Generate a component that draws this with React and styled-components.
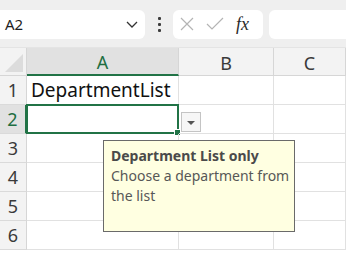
import React from "react";
import styled, { createGlobalStyle } from "styled-components";

const GlobalStyle = createGlobalStyle`
  html, body {
    margin: 0;
    padding: 0;
    background: #ffffff;
    overflow: hidden;
  }
  body {
    font-family: "Noto Sans", "Open Sans", sans-serif;
  }
`;

const Page = styled.div`
  width: 346px;
  height: 254px;
  position: relative;
  overflow: hidden;
  background: #ffffff;
`;

const Toolbar = styled.div`
  height: 48px;
  background: #efefef;
  display: flex;
  align-items: center;
  box-sizing: border-box;
  padding-top: 1px;
  border-bottom: 1px solid #e4e4e4;
`;

const NameBox = styled.div`
  width: 145px;
  height: 29px;
  background: #ffffff;
  border-radius: 0 6px 6px 0;
  display: flex;
  align-items: center;
  justify-content: space-between;
  padding: 0 6px 0 5px;
  box-sizing: border-box;
  font-size: 15px;
  color: #1f1f1f;
`;

const Dots = styled.div`
  width: 28px;
  display: flex;
  flex-direction: column;
  align-items: center;
  gap: 3px;

  span {
    width: 3px;
    height: 3px;
    background: #3c3c3c;
    border-radius: 1px;
  }
`;

const FxBox = styled.div`
  width: 90px;
  height: 29px;
  background: #ffffff;
  border-radius: 6px;
  display: flex;
  align-items: center;
  padding: 0 6px;
  box-sizing: border-box;
  gap: 11px;
`;

const FxLabel = styled.span`
  font-family: "Liberation Serif", "DejaVu Serif", serif;
  font-style: italic;
  font-size: 18px;
  color: #2a2a2a;
  margin-left: 1px;
`;

const FormulaInput = styled.div`
  flex: 1;
  height: 29px;
  margin-left: 6px;
  background: #ffffff;
  border-radius: 6px 0 0 6px;
`;

const Grid = styled.div`
  display: grid;
  grid-template-columns: 27px 152px 95px 72px;
  grid-template-rows: 28px repeat(6, 29px);
  position: relative;
`;

const Corner = styled.div`
  background: #f3f3f3;
  border-right: 1px solid #d6d6d6;
  border-bottom: 1px solid #d6d6d6;
  position: relative;
  box-sizing: border-box;

  &::after {
    content: "";
    position: absolute;
    right: 3px;
    bottom: 3px;
    width: 0;
    height: 0;
    border-left: 18px solid transparent;
    border-bottom: 18px solid #dcdcdc;
  }
`;

const ColHeader = styled.div`
  background: ${(p) => (p.$active ? "#e1e1e1" : "#f3f3f3")};
  color: ${(p) => (p.$active ? "#1e6e42" : "#3a3a3a")};
  border-right: 1px solid #d6d6d6;
  border-bottom: ${(p) => (p.$active ? "2px solid #217346" : "1px solid #d6d6d6")};
  box-sizing: border-box;
  display: flex;
  align-items: center;
  justify-content: center;
  font-size: 18px;
  padding-top: 2px;
`;

const RowHeader = styled.div`
  background: ${(p) => (p.$active ? "#e1e1e1" : "#f3f3f3")};
  color: ${(p) => (p.$active ? "#1e6e42" : "#3a3a3a")};
  border-right: ${(p) => (p.$active ? "2px solid #217346" : "1px solid #d6d6d6")};
  border-bottom: 1px solid #dadada;
  box-sizing: border-box;
  display: flex;
  align-items: center;
  justify-content: center;
  font-size: 18px;
`;

const Cell = styled.div`
  border-right: 1px solid #e1e1e1;
  border-bottom: 1px solid #e1e1e1;
  box-sizing: border-box;
  display: flex;
  align-items: center;
  padding-left: 4px;
  font-size: 19px;
  color: #111111;
  position: relative;
  white-space: nowrap;
`;

const SelectedCell = styled(Cell)`
  border: 2px solid #217346;
  margin: -1px 0 0 -1px;
  width: calc(100% + 1px);
  height: calc(100% + 1px);

  &::after {
    content: "";
    position: absolute;
    right: -4px;
    bottom: -4px;
    width: 5px;
    height: 5px;
    background: #217346;
    border: 1px solid #ffffff;
  }
`;

const DropButton = styled.div`
  position: absolute;
  left: 181px;
  top: 64px;
  width: 20px;
  height: 20px;
  box-sizing: border-box;
  border: 1px solid #c4c4c4;
  background: #f6f6f6;
  display: flex;
  align-items: center;
  justify-content: center;

  &::before {
    content: "";
    width: 0;
    height: 0;
    border-left: 4px solid transparent;
    border-right: 4px solid transparent;
    border-top: 4px solid #555555;
    margin-top: 1px;
  }
`;

const Tooltip = styled.div`
  position: absolute;
  left: 103px;
  top: 92px;
  width: 192px;
  height: 92px;
  box-sizing: border-box;
  background: #ffffe1;
  border: 1px solid #6a6a6a;
  padding: 5px 0 0 7px;
  font-size: 14px;
  line-height: 20px;
  color: #575757;
`;

const TipTitle = styled.div`
  font-weight: 700;
  color: #4a4a4a;
`;

const rows = [1, 2, 3, 4, 5, 6];

export default function App() {
  return (
    <Page>
      <GlobalStyle />
      <Toolbar>
        <NameBox>
          <span>A2</span>
          <svg width="14" height="14" viewBox="0 0 14 14">
            <path d="M2 5 L7 10 L12 5" fill="none" stroke="#333" strokeWidth="1.3" />
          </svg>
        </NameBox>
        <Dots>
          <span />
          <span />
          <span />
        </Dots>
        <FxBox>
          <svg width="16" height="16" viewBox="0 0 16 16">
            <path d="M2 2 L14 14 M14 2 L2 14" stroke="#b4b4b4" strokeWidth="1.2" />
          </svg>
          <svg width="18" height="16" viewBox="0 0 18 16">
            <path d="M1 8 L6 13 L17 2" fill="none" stroke="#b4b4b4" strokeWidth="1.2" />
          </svg>
          <FxLabel>fx</FxLabel>
        </FxBox>
        <FormulaInput />
      </Toolbar>
      <Grid>
        <Corner />
        <ColHeader $active>A</ColHeader>
        <ColHeader>B</ColHeader>
        <ColHeader>C</ColHeader>
        {rows.map((r) => (
          <React.Fragment key={r}>
            <RowHeader $active={r === 2}>{r}</RowHeader>
            {r === 1 ? <Cell>DepartmentList</Cell> : r === 2 ? <SelectedCell /> : <Cell />}
            <Cell />
            <Cell />
          </React.Fragment>
        ))}
        <DropButton />
        <Tooltip>
          <TipTitle>Department List only</TipTitle>
          <div>Choose a department from the list</div>
        </Tooltip>
      </Grid>
    </Page>
  );
}
